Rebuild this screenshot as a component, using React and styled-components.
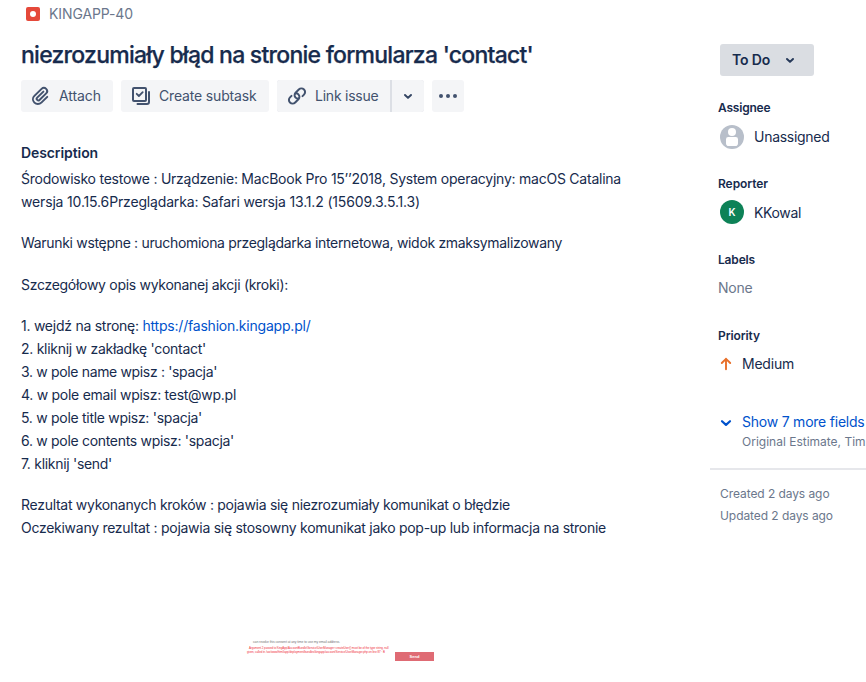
import React from 'react';
import styled, { createGlobalStyle } from 'styled-components';

const GlobalStyle = createGlobalStyle`
  * { box-sizing: border-box; }
  html, body { margin: 0; padding: 0; background: #fff; overflow: hidden; }
  body { font-family: Inter, "Noto Sans", sans-serif; color: #172b4d; }
`;

const Page = styled.div`
  display: flex;
  width: 866px;
  height: 682px;
  overflow: hidden;
`;

const Main = styled.main`
  display: flex;
  flex-direction: column;
  width: 710px;
  flex: none;
  padding: 4px 0 0 21px;
`;

const Text = styled.span`
  display: block;
  flex: none;
  font-size: ${(p) => p.$size || 14}px;
  font-weight: ${(p) => p.$weight || 400};
  line-height: ${(p) => (p.$size === 12 ? 16 : 20)}px;
  letter-spacing: ${(p) => p.$track || 0}px;
  color: ${(p) => p.$color || '#172b4d'};
  white-space: nowrap;
`;

const Breadcrumb = styled.div`
  display: flex;
  align-items: center;
  gap: 8px;
  height: 20px;
  padding-left: 4px;
`;

const Title = styled.h1`
  margin: 17px 0 0;
  font-size: 23px;
  font-weight: 500;
  line-height: 28px;
  letter-spacing: -0.75px;
  white-space: nowrap;
  -webkit-text-stroke: 0.25px #172b4d;
`;

const Toolbar = styled.div`
  display: flex;
  gap: 8px;
  margin-top: 11px;
`;

const Split = styled.div`
  display: flex;
  gap: 2px;
  border-radius: 3px;
  background: #dcdfe5;
`;

const Button = styled.button`
  display: flex;
  align-items: center;
  justify-content: ${(p) => (p.$label ? 'flex-start' : 'center')};
  gap: 6px;
  width: ${(p) => p.$width}px;
  height: 32px;
  padding: ${(p) => (p.$label ? '0 0 0 8px' : '0')};
  border: 0;
  border-radius: ${(p) => p.$radius || '3px'};
  background: #f4f5f7;
  font-family: inherit;
`;

const SectionTitle = styled.h2`
  margin: 31px 0 0;
  font-size: 14px;
  font-weight: 600;
  line-height: 20px;
  letter-spacing: -0.09px;
`;

const Description = styled.div`
  margin-top: 4px;
  font-size: 14px;
  line-height: 23px;
`;

const Paragraph = styled.div`
  margin-bottom: ${(p) => p.$gap || 18}px;
`;

const Line = styled.div`
  height: 23px;
  letter-spacing: ${(p) => p.$track}px;
  white-space: pre;
`;

const Link = styled.a`
  color: #0052cc;
  letter-spacing: -0.213px;
`;

const Attachment = styled.div`
  display: flex;
  align-items: flex-end;
  margin: 99px 0 0 226px;
`;

const Notes = styled.div`
  width: 148px;
  height: 26px;
`;

const Note = styled.div`
  height: ${(p) => p.$height}px;
  padding-left: ${(p) => p.$indent || 0}px;
  font-family: "Liberation Sans", sans-serif;
  font-size: ${(p) => p.$size}px;
  line-height: ${(p) => p.$height}px;
  letter-spacing: ${(p) => p.$track || 0}px;
  color: ${(p) => p.$color};
  white-space: nowrap;
`;

const Send = styled.div`
  width: 39px;
  height: 9px;
  margin-bottom: 4px;
  background: #df6b74;
  color: #fff;
  font: 700 4px/9px "Liberation Sans", sans-serif;
  text-align: center;
`;

const Sidebar = styled.aside`
  display: flex;
  flex-direction: column;
  width: 156px;
  padding-top: 44px;
`;

const Status = styled.button`
  display: flex;
  align-items: center;
  gap: 8px;
  width: 94px;
  height: 32px;
  margin: 0 0 0 10px;
  padding: 0 0 0 12px;
  border: 0;
  border-radius: 3px;
  background: #dadde2;
  font-family: inherit;
`;

const Field = styled.section`
  height: 76px;
  padding-left: 8px;
`;

const Fields = styled.div`
  margin-top: 24px;
`;

const Value = styled.div`
  display: flex;
  align-items: center;
  gap: ${(p) => p.$gap || 0}px;
  height: 24px;
  margin-top: ${(p) => p.$top}px;
  padding-left: ${(p) => p.$indent || 0}px;
`;

const Avatar = styled.span`
  display: flex;
  align-items: center;
  justify-content: center;
  width: 24px;
  height: 24px;
  margin-bottom: 2px;
  border-radius: 50%;
  background: #0d8257;
  color: #fff;
  font-size: 10px;
  font-weight: 600;
`;

const More = styled.div`
  display: flex;
  gap: 8px;
  margin-top: 8px;
  padding-left: 8px;
`;

const MoreChevron = styled.svg`
  flex: none;
`;

const MoreText = styled.div`
  display: flex;
  flex-direction: column;
  gap: 2px;
`;

const Meta = styled.footer`
  display: flex;
  flex-direction: column;
  gap: 6px;
  margin-top: 18px;
  padding: 16px 0 0 10px;
  border-top: 2px solid #e6e7eb;
`;

const BugIcon = () => (
  <svg width="16" height="16" viewBox="0 0 16 16">
    <rect x="1" y="1" width="14" height="14" rx="2" fill="#e5493a" />
    <circle cx="8" cy="8" r="3" fill="#fff" />
  </svg>
);

const icon = { width: 24, height: 24, viewBox: '0 0 24 24', fill: 'none' };

const AttachIcon = () => (
  <svg {...icon}>
    <path fill="#42526e" d="M11.643 17.965c-1.53 1.495-4.016 1.496-5.542.004a3.773 3.773 0 0 1 .002-5.412l7.147-6.985a2.316 2.316 0 0 1 3.233-.003c.893.873.895 2.282.004 3.153l-6.703 6.55a.653.653 0 0 1-.914-.008.62.62 0 0 1 0-.902l6.229-6.087a.941.941 0 0 0 0-1.353.995.995 0 0 0-1.384 0l-6.23 6.087a2.502 2.502 0 0 0 0 3.607 2.643 2.643 0 0 0 3.683.009l6.703-6.55a4.175 4.175 0 0 0-.003-5.86 4.308 4.308 0 0 0-6.001.003L4.72 11.204a5.635 5.635 0 0 0 0 8.118 5.85 5.85 0 0 0 8.31-.004l5.922-5.787a.942.942 0 0 0 0-1.353.995.995 0 0 0-1.384 0l-5.925 5.787Z" />
  </svg>
);

const SubtaskIcon = () => (
  <svg {...icon} stroke="#42526e" strokeWidth="2" strokeLinecap="round" strokeLinejoin="round">
    <rect x="4" y="4" width="13" height="13" rx="1" />
    <path d="m7.7 9.8 2.2 2.2 3.8-3.8" strokeWidth="1.8" />
    <path d="M20 8v10a2 2 0 0 1-2 2H8.5" />
  </svg>
);

const LinkIcon = () => (
  <svg {...icon} stroke="#42526e" strokeWidth="2" strokeLinecap="round">
    <path d="M12.9 14.3a3.6 3.6 0 0 1-2.7-1.1 3.5 3.5 0 0 1 0-4.9l3.2-3.2a3.7 3.7 0 0 1 5.2 0 3.6 3.6 0 0 1 0 5.1l-1.5 1.5" transform="translate(.4 .4)" />
    <path d="M11.1 9.7a3.6 3.6 0 0 1 2.7 1.1 3.5 3.5 0 0 1 0 4.9l-3.2 3.2a3.7 3.7 0 0 1-5.2 0 3.6 3.6 0 0 1 0-5.1l1.5-1.5" transform="translate(-.4 -.4)" />
  </svg>
);

const Chevron = ({ color = '#344563', size = 24 }) => (
  <svg width={size} height={size} viewBox="0 0 24 24" fill="none">
    <path d="m9 11 3 2.9 3-2.9" stroke={color} strokeWidth="2" strokeLinecap="round" strokeLinejoin="round" />
  </svg>
);

const MoreIcon = () => (
  <svg {...icon} fill="#42526e">
    <circle cx="5" cy="12" r="2" />
    <circle cx="12" cy="12" r="2" />
    <circle cx="19" cy="12" r="2" />
  </svg>
);

const PersonIcon = () => (
  <svg width="24" height="24" viewBox="0 0 24 24">
    <circle cx="12" cy="12" r="12" fill="#b8bfca" />
    <circle cx="12" cy="7" r="4" fill="#fff" />
    <path d="M6 14.2a2.2 2.2 0 0 1 2.2-2.2h7.6a2.2 2.2 0 0 1 2.2 2.2v4a2.8 2.8 0 0 1-2.8 2.800H8.800A2.800 2.800 0 0 1 6 18.200Z" fill="#fff" />
  </svg>
);

const PriorityIcon = () => (
  <svg width="16" height="16" viewBox="0 0 16 16" fill="none" stroke="#e8702a" strokeWidth="1.9" strokeLinecap="round" strokeLinejoin="round">
    <path d="M8 13.300V2.800M3.800 7 8 2.800 12.200 7" />
  </svg>
);

const DESCRIPTION = [
  { lines: [
    ['Środowisko testowe : Urządzenie: MacBook Pro 15’’2018, System operacyjny: macOS Catalina', -0.239],
    ['wersja 10.15.6Przeglądarka: Safari wersja 13.1.2 (15609.3.5.1.3)', -0.162],
  ] },
  { gap: 19, lines: [['Warunki wstępne : uruchomiona przeglądarka internetowa, widok zmaksymalizowany', -0.316]] },
  { lines: [['Szczegółowy opis wykonanej akcji (kroki):', -0.29]] },
  { lines: [
    ['1. wejdź na stronę: ', -0.252, 'https://fashion.kingapp.pl/'],
    ["2. kliknij w zakładkę 'contact'", -0.276],
    ["3. w pole name wpisz : 'spacja'", -0.345],
    ['4. w pole email wpisz: test@wp.pl', -0.274],
    ["5. w pole title wpisz: 'spacja'", -0.294],
    ["6. w pole contents wpisz: 'spacja'", -0.308],
    ["7. kliknij 'send'", -0.298],
  ] },
  { gap: 1, lines: [
    ['Rezultat wykonanych kroków : pojawia się niezrozumiały komunikat o błędzie', -0.284],
    ['Oczekiwany rezultat : pojawia się stosowny komunikat jako pop-up lub informacja na stronie', -0.275],
  ] },
];

export default function App() {
  return (
    <Page>
      <GlobalStyle />
      <Main>
        <Breadcrumb>
          <BugIcon />
          <Text $color="#6b778c" $track={-0.107}>KINGAPP-40</Text>
        </Breadcrumb>
        <Title>niezrozumiały błąd na stronie formularza 'contact'</Title>
        <Toolbar>
          <Button $label $width={92}><AttachIcon /><Text $color="#42526e" $track={-0.07}>Attach</Text></Button>
          <Button $label $width={148}><SubtaskIcon /><Text $color="#42526e" $track={-0.164}>Create subtask</Text></Button>
          <Split>
            <Button $label $width={113} $radius="3px 0 0 3px"><LinkIcon /><Text $color="#42526e" $track={-0.231}>Link issue</Text></Button>
            <Button $width={32} $radius="0 3px 3px 0"><Chevron /></Button>
          </Split>
          <Button $width={32}><MoreIcon /></Button>
        </Toolbar>
        <SectionTitle>Description</SectionTitle>
        <Description>
          {DESCRIPTION.map((paragraph, i) => (
            <Paragraph key={i} $gap={paragraph.gap}>
              {paragraph.lines.map(([text, track, link]) => (
                <Line key={text} $track={track}>{text}{link && <Link>{link}</Link>}</Line>
              ))}
            </Paragraph>
          ))}
        </Description>
        <Attachment>
          <Notes>
            <Note $size={3.4} $height={7} $indent={6} $track={-0.08} $color="#777">can revoke this consent at any time to use my email address.</Note>
            <Note $size={2.9} $height={5} $indent={2} $track={-0.06} $color="#f0303c">Argument 2 passed to KingApp\AccountBundle\Service\UserManager::createUser() must be of the type string, null</Note>
            <Note $size={2.9} $height={3} $track={-0.06} $color="#f0303c">given, called in /var/www/html/app/deployment/bundles/kingapp/account/Service/UserManager.php on line 87 · B</Note>
          </Notes>
          <Send>Send</Send>
        </Attachment>
      </Main>
      <Sidebar>
        <Status><Text $weight={600} $track={-0.167}>To Do</Text><Chevron color="#253858" /></Status>
        <Fields>
          <Field>
            <Text $size={12} $weight={600} $track={-0.2}>Assignee</Text>
            <Value $top={9} $gap={10} $indent={2}><PersonIcon /><Text $track={-0.281}>Unassigned</Text></Value>
          </Field>
          <Field>
            <Text $size={12} $weight={600} $track={-0.066}>Reporter</Text>
            <Value $top={9} $gap={10} $indent={2}><Avatar>K</Avatar><Text $track={-0.352}>KKowal</Text></Value>
          </Field>
          <Field>
            <Text $size={12} $weight={600} $track={-0.165}>Labels</Text>
            <Value $top={8}><Text $color="#6b778c" $track={-0.219}>None</Text></Value>
          </Field>
          <Field>
            <Text $size={12} $weight={600} $track={-0.081}>Priority</Text>
            <Value $top={8} $gap={8}><PriorityIcon /><Text $track={-0.219}>Medium</Text></Value>
          </Field>
        </Fields>
        <More>
          <MoreChevron width="16" height="20" viewBox="0 0 16 20" fill="none">
            <path d="m4 9.200 4 3.700 4-3.700" stroke="#0052cc" strokeWidth="2.200" strokeLinecap="round" strokeLinejoin="round" />
          </MoreChevron>
          <MoreText>
            <Text $color="#0052cc" $track={-0.224}>Show 7 more fields</Text>
            <Text $size={12} $color="#6b778c">Original Estimate, Tim</Text>
          </MoreText>
        </More>
        <Meta>
          <Text $size={12} $color="#6b778c" $track={-0.073}>Created 2 days ago</Text>
          <Text $size={12} $color="#6b778c" $track={-0.069}>Updated 2 days ago</Text>
        </Meta>
      </Sidebar>
    </Page>
  );
}
